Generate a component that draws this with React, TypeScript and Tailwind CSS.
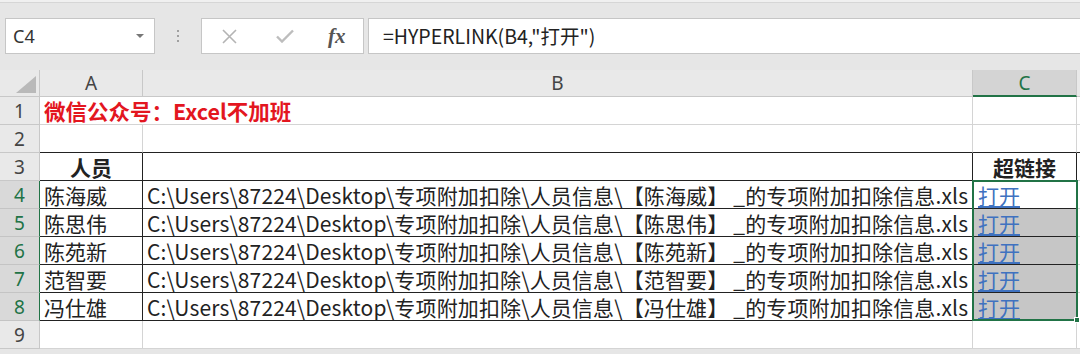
import type { ReactNode } from 'react';

const NAMES = ['陈海威', '陈思伟', '陈苑新', '范智要', '冯仕雄'];

const CELL_FONT = '[font-family:"Noto_Sans_CJK_SC","Noto_Sans",sans-serif]';
const HEAD_FONT = '[font-family:"Noto_Sans","Open_Sans",sans-serif]';

function Cell({ className = '', children }: { className?: string; children?: ReactNode }) {
  return (
    <div className={`box-border flex items-center overflow-hidden whitespace-nowrap leading-[24px] border-r border-b ${className}`}>
      {children}
    </div>
  );
}

function RowHead({ n, active }: { n: number; active?: boolean }) {
  return (
    <Cell
      className={`justify-center text-[19px] ${HEAD_FONT} ${
        active
          ? 'bg-[#d9d9d9] text-[#217346] border-b-[#c4c4c4] border-r-[#217346]'
          : 'bg-[#e9e9e9] text-[#444] border-b-[#c8c8c8] border-r-[#c8c8c8]'
      }`}
    >
      {n}
    </Cell>
  );
}

export default function App() {
  return (
    <div className="relative w-[1080px] h-[354px] overflow-hidden bg-[#e6e6e6]">
      {/* Formula bar area */}
      <div className="h-[3px] bg-[#f0f0f0] border-b border-[#d6d6d6]" />
      <div className="flex items-start h-[67px] pt-[15px]">
        <div className="ml-[5px] w-[150px] h-[36px] bg-white border border-[#c6c6c6] flex items-center justify-between pl-[7px] pr-[10px]">
          <span className={`text-[18px] text-[#333] ${HEAD_FONT}`}>C4</span>
          <span className="w-0 h-0 border-l-[4px] border-r-[4px] border-t-[4px] border-l-transparent border-r-transparent border-t-[#777]" />
        </div>
        <div className="w-[46px] h-[36px] flex flex-col items-center justify-center gap-[3px]">
          <span className="w-[2px] h-[2px] bg-[#a0a0a0]" />
          <span className="w-[2px] h-[2px] bg-[#a0a0a0]" />
          <span className="w-[2px] h-[2px] bg-[#a0a0a0]" />
        </div>
        <div className="w-[163px] h-[36px] bg-white border border-[#c6c6c6] flex items-center">
          <svg className="ml-[20px]" width="15" height="15" viewBox="0 0 15 15">
            <path d="M1 1L14 14M14 1L1 14" stroke="#b4b4b4" strokeWidth="1.6" />
          </svg>
          <svg className="ml-[39px]" width="18" height="14" viewBox="0 0 18 14">
            <path d="M1 7.5L6 12.5L17 1.5" stroke="#bdbdbd" strokeWidth="2.4" fill="none" />
          </svg>
          <span className="ml-[34px] text-[21px] italic font-bold text-[#555] [font-family:'Liberation_Serif',serif] leading-none">
            fx
          </span>
        </div>
        <div className="ml-[4px] flex-1 h-[36px] bg-white border-y border-l border-[#c6c6c6] flex items-center pl-[14px]">
          <span className={`text-[19.5px] text-[#222] ${CELL_FONT}`}>=HYPERLINK(B4,"打开")</span>
        </div>
      </div>

      {/* Sheet grid */}
      <div className="relative grid grid-cols-[40px_103px_830px_104px_3px] grid-rows-[27px_repeat(9,28px)] bg-white text-[#222]">
        {/* header row */}
        <Cell className="relative bg-[#e9e9e9] border-r-[#c8c8c8] border-b-[#c8c8c8]">
          <svg className="absolute right-[3px] bottom-[3px]" width="20" height="17" viewBox="0 0 20 17">
            <polygon points="20,0 20,17 0,17" fill="#b9b9b9" />
          </svg>
        </Cell>
        <Cell className={`justify-center bg-[#e9e9e9] text-[#444] text-[19px] border-r-[#c8c8c8] border-b-[#c8c8c8] ${HEAD_FONT}`}>A</Cell>
        <Cell className={`justify-center bg-[#e9e9e9] text-[#444] text-[19px] border-r-[#c8c8c8] border-b-[#c8c8c8] ${HEAD_FONT}`}>B</Cell>
        <Cell className={`justify-center bg-[#d4d4d4] text-[#217346] text-[19px] border-r-[#c8c8c8] border-b-2 border-b-[#217346] ${HEAD_FONT}`}>C</Cell>
        <Cell className="bg-[#e9e9e9] border-r-0 border-b-[#c8c8c8]" />

        {/* row 1 */}
        <RowHead n={1} />
        <Cell className="col-span-2 pl-[4px] border-r-[#d4d4d4] border-b-[#d4d4d4] overflow-visible">
          <span className={`text-[21.5px] font-bold text-[#e3161f] ${CELL_FONT}`}>微信公众号：Excel不加班</span>
        </Cell>
        <Cell className="border-r-[#d4d4d4] border-b-[#d4d4d4]" />
        <Cell className="border-r-0 border-b-[#d4d4d4]" />

        {/* row 2 */}
        <RowHead n={2} />
        <Cell className="border-r-[#d4d4d4] border-b-[#222]" />
        <Cell className="border-r-[#d4d4d4] border-b-[#222]" />
        <Cell className="border-r-[#d4d4d4] border-b-[#222]" />
        <Cell className="border-r-0 border-b-[#222]" />

        {/* row 3 */}
        <RowHead n={3} />
        <Cell className={`justify-center text-[21px] font-bold border-r-[#222] border-b-[#222] ${CELL_FONT}`}>人员</Cell>
        <Cell className="border-r-[#222] border-b-[#222]" />
        <Cell className={`justify-center text-[21px] font-bold border-r-[#222] border-b-[#222] ${CELL_FONT}`}>超链接</Cell>
        <Cell className="border-r-0 border-b-[#d4d4d4]" />

        {NAMES.map((name, i) => (
          <div key={name} className="contents">
            <RowHead n={i + 4} active />
            <Cell className={`pl-[4px] text-[21px] border-r-[#222] border-b-[#222] ${CELL_FONT}`}>{name}</Cell>
            <Cell className={`pl-[4px] text-[21px] tracking-[0.15px] border-r-[#222] border-b-[#222] ${CELL_FONT}`}>
              C:\Users\87224\Desktop\专项附加扣除\人员信息\【{name}】 _的专项附加扣除信息.xls
            </Cell>
            <Cell
              className={`pl-[5px] text-[21px] border-r-[#222] border-b-[#222] ${CELL_FONT} ${
                i === 0 ? 'bg-white' : 'bg-[#c6c6c6]'
              }`}
            >
              <span className="text-[#3f72c0] underline underline-offset-[2px]">打开</span>
            </Cell>
            <Cell className="border-r-0 border-b-[#d4d4d4]" />
          </div>
        ))}

        {/* row 9 */}
        <RowHead n={9} />
        <Cell className="border-r-[#d4d4d4] border-b-[#d4d4d4]" />
        <Cell className="border-r-[#d4d4d4] border-b-[#d4d4d4]" />
        <Cell className="border-r-[#d4d4d4] border-b-[#d4d4d4]" />
        <Cell className="border-r-0 border-b-[#d4d4d4]" />

        {/* selection outline over C4:C8 */}
        <div className="pointer-events-none absolute left-[972px] top-[110px] w-[106px] h-[141px] border-2 border-[#217346]" />
        <div className="pointer-events-none absolute left-[1074px] top-[247px] w-[6px] h-[6px] bg-[#217346] border border-white" />
      </div>
    </div>
  );
}
